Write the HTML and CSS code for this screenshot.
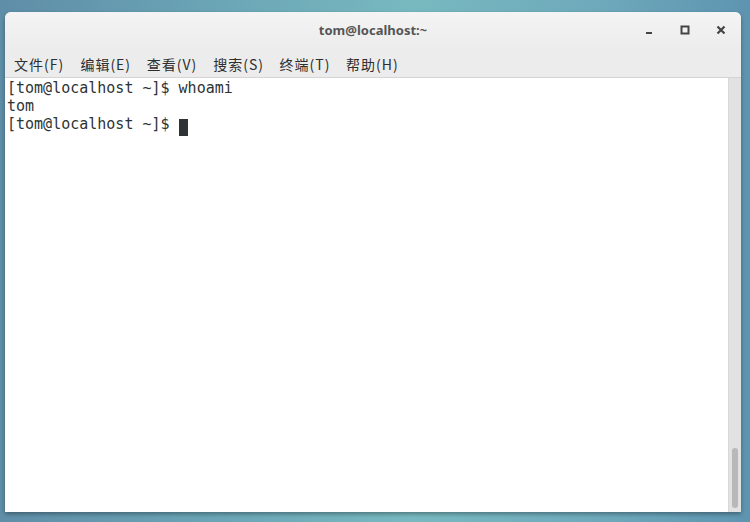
FILE: index.html
```html
<!DOCTYPE html>
<html lang="zh-CN">

<head>
    <meta charset="UTF-8">
    <meta name="viewport" content="width=device-width, initial-scale=1.0">
    <title>tom@localhost:~</title>
    <link rel="stylesheet" href="styles.css">
</head>

<body>

    <div class="window">
        <div class="titlebar">
            <span class="title">tom@localhost:~</span>
            <div class="controls">
                <span class="ctl ctl-min">
                    <svg width="10" height="10" viewBox="0 0 10 10"><rect x="2" y="7" width="6" height="2" fill="#444"/></svg>
                </span>
                <span class="ctl ctl-max">
                    <svg width="10" height="10" viewBox="0 0 10 10"><rect x="1.5" y="1.5" width="7" height="7" fill="none" stroke="#444" stroke-width="2"/></svg>
                </span>
                <span class="ctl ctl-close">
                    <svg width="10" height="10" viewBox="0 0 10 10"><path d="M1.5 1.5 L8.5 8.5 M8.5 1.5 L1.5 8.5" stroke="#444" stroke-width="2.2"/></svg>
                </span>
            </div>
        </div>

        <div class="menubar">
            <span class="menu-item">文件(F)</span>
            <span class="menu-item">编辑(E)</span>
            <span class="menu-item">查看(V)</span>
            <span class="menu-item">搜索(S)</span>
            <span class="menu-item">终端(T)</span>
            <span class="menu-item">帮助(H)</span>
        </div>

        <div class="terminal">
            <pre class="screen">[tom@localhost ~]$ whoami
tom
[tom@localhost ~]$ <span class="cursor"> </span></pre>
            <div class="scrollbar">
                <div class="thumb"></div>
            </div>
        </div>
    </div>

</body>

</html>
```

FILE: styles.css
```css
body {
    margin: 0;
    width: 750px;
    height: 522px;
    overflow: hidden;
    box-sizing: border-box;
    padding: 12px 9px 10px 5px;
    background: linear-gradient(90deg, #5f8ea8 0%, #6ba6b6 30%, #78b9c0 55%, #6ea9bb 80%, #5e94b0 100%);
    font-family: "Noto Sans", "Noto Sans CJK SC", sans-serif;
}

.window {
    display: flex;
    flex-direction: column;
    height: 500px;
    background-color: #ededed;
    border-radius: 6px 6px 0 0;
    box-shadow: 0 2px 4px rgba(0, 0, 0, 0.35);
    overflow: hidden;
}

.titlebar {
    position: relative;
    height: 38px;
    display: flex;
    align-items: center;
    justify-content: center;
    background: linear-gradient(#f4f4f4, #ececec);
}

.title {
    font-size: 13px;
    font-weight: bold;
    color: #555;
    margin-top: -3px;
}

.controls {
    position: absolute;
    right: 15px;
    top: 13px;
    display: flex;
    gap: 26px;
}

.ctl {
    display: flex;
    width: 10px;
    height: 10px;
}

.menubar {
    height: 27px;
    display: flex;
    align-items: center;
    padding-left: 9px;
    background-color: #ececec;
    border-bottom: 1px solid #d4d4d4;
}

.menu-item {
    font-family: "Noto Sans CJK SC", sans-serif;
    font-size: 14px;
    letter-spacing: 1px;
    color: #2e2e2e;
    width: 66.4px;
    margin-top: 1px;
}

.terminal {
    flex: 1;
    display: flex;
    background-color: #fff;
}

.screen {
    flex: 1;
    margin: 0;
    padding: 1px 0 0 2px;
    font-family: "DejaVu Sans Mono", monospace;
    font-size: 15px;
    line-height: 18px;
    color: #2e3436;
}

.cursor {
    display: inline-block;
    width: 9px;
    height: 17px;
    vertical-align: -4px;
    background-color: #2e3436;
}

.scrollbar {
    width: 12px;
    display: flex;
    flex-direction: column;
    justify-content: flex-end;
    align-items: center;
    padding-bottom: 4px;
    background-color: #e2e2e2;
    border-left: 1px solid #d8d8d8;
}

.thumb {
    width: 6px;
    height: 60px;
    border-radius: 3px;
    background-color: #b8b8b8;
}
```
